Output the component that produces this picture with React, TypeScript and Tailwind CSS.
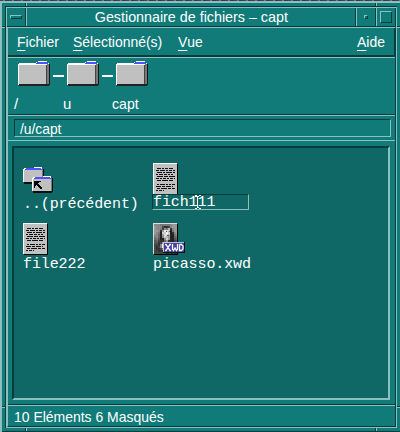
import React from "react";

const sans = "font-['Liberation_Sans',Arial,sans-serif] text-[15px] leading-[18px] text-white whitespace-pre";
const mono = "font-['Liberation_Mono','Courier_New',monospace] text-[15px] leading-[16px] tracking-[-0.1px] text-white whitespace-pre";

function Folder() {
  return (
    <svg width="33" height="26" viewBox="0 0 33 26" shapeRendering="crispEdges" className="block">
      <path d="M1 2H18V1H20V0H29V2H31V23H29V24H0V3H1Z" fill="#fff" />
      <path d="M29 3H31V23H29Z" fill="#777" />
      <path d="M31 3H32V24H31Z" fill="#181818" />
      <path d="M19 1H29V2H30V3H18V2H19Z" fill="#5252fa" />
      <path d="M1 4H29V23H1Z" fill="#c0c0c0" />
      <path d="M28 4H29V23H28Z" fill="#444" />
      <path d="M1 23H31V25H1Z" fill="#222" />
    </svg>
  );
}

function ParentFolder() {
  const small = (x: number, y: number) => (
    <g transform={`translate(${x} ${y})`}>
      <path d="M2 2H21V16H20V17H1V3H2Z" fill="#081010" />
      <path d="M1 1H11V0H19V2H20V14H19V15H0V2H1Z" fill="#fff" />
      <path d="M3 1H18V2H20V3H2V2H3Z" fill="#5252fa" />
      <path d="M1 3H19V15H1Z" fill="#c0c0c0" />
      <path d="M19 3H20V15H19Z" fill="#777" />
    </g>
  );
  return (
    <svg width="32" height="27" viewBox="0 0 32 27" shapeRendering="crispEdges" className="block">
      {small(0, 0)}
      {small(9, 9)}
      <path d="M11 14H18V15H16V16H15V17H16V18H17V19H18V20H19V22H17V21H16V20H15V19H14V18H13V19H12V21H11Z" fill="#000" />
    </svg>
  );
}

// Dash and gap lengths of each line of the miniature page.
const textLines = ["4 1 2 1 3 1", "3 1 5 1 2 1", "5 1 2 1 6 1", "2 1 4 1 3 1", "6 1 4 1", "3 1 2 1", "4 1 6 1", "0 30", "2 1 5 1 2 1", "5 1 3 1", "3 1 6 1", "2 1 3 1"];

function Doc() {
  return (
    <svg width="25" height="32" viewBox="0 0 25 32" shapeRendering="crispEdges" className="block">
      <path d="M1 1H25V32H1Z" fill="#000" />
      <path d="M0 0H24V31H0Z" fill="#fff" />
      <path d="M1 1H24V31H1Z" fill="#c0c0c0" />
      {textLines.map((line, i) => (
        <line key={i} x1={i % 2 ? 3 : 4} x2={i === 11 ? 11 : i % 3 ? 22 : 20} y1={5.5 + i * 2} y2={5.5 + i * 2}
          stroke="#111" strokeWidth="1" strokeDasharray={line} />
      ))}
    </svg>
  );
}

// Grey levels of the portrait thumbnail, two pixels per cell.
const portrait = [
  "888777778999",
  "988843348999",
  "9887487b3899",
  "99839edc2799",
  "9872ccec2389",
  "88629ddb2278",
  "78628cb92267",
  "675228c92256",
  "564336932245",
  "55349cb93344",
  "4438eedb8334",
  "4348eeec9333",
  "43347aa74333",
  "443333333333",
  "444444333333",
];

function Picture() {
  return (
    <svg width="33" height="32" viewBox="0 0 33 32" shapeRendering="crispEdges" className="block">
      <path d="M1 1H25V32H1Z" fill="#000" />
      <path d="M0 0H24V1H1V31H0Z" fill="#ddd" />
      {portrait.flatMap((row, y) =>
        row.split("").map((c, x) => (
          <rect key={`${x}-${y}`} x={1 + x * 2} y={1 + y * 2} width={x === 11 ? 1 : 2} height="2" fill={`#${c}${c}${c}`} />
        )),
      )}
      <path d="M13 8H14V9H13ZM16 8H17V9H16ZM14 12H16V13H14Z" fill="#555" />
      <path d="M10 19H32V30H10Z" fill="#101018" />
      <path d="M10 19H31V29H10Z" fill="#c0c0d8" />
      <path d="M11 20H31V29H11Z" fill="#4040a0" />
      <g stroke="#fff" strokeWidth="1.3" fill="none" shapeRendering="auto">
        <path d="M12 21.5H13L17 27.5H18M18 21.5H17L13 27.5H12" />
        <path d="M19.5 21V26L20.5 27.5L22 25L23.5 27.5L24.5 26V21" />
        <path d="M26.5 21.5H28.5L30 23V26L28.5 27.5H26.5V21.5" />
      </g>
    </svg>
  );
}

function MenuItem({ label }: { label: string }) {
  return (
    <div className={`${sans} w-max origin-left scale-x-[.93]`}>
      <span className="inline-block h-[18px] border-b border-white">{label[0]}</span>
      {label.slice(1)}
    </div>
  );
}

function Ticks({ className }: { className: string }) {
  return (
    <div className={`flex ${className}`}>
      <i className="ml-[23px] w-px bg-[#083c3c]" />
      <i className="w-px bg-[#8bc0be]" />
      <i className="ml-[348px] w-px bg-[#083c3c]" />
      <i className="w-px bg-[#8bc0be]" />
    </div>
  );
}

function SideTick({ className }: { className: string }) {
  return <i className={`absolute h-0.5 w-[3px] border-t border-b border-t-[#083c3c] border-b-[#8bc0be] ${className}`} />;
}

export default function App() {
  return (
    <div className="relative flex h-[432px] w-[400px] flex-col overflow-hidden bg-[#117b79]">
      <div className="h-px shrink-0 bg-[repeating-linear-gradient(90deg,#484058_0px,#484058_3px,#77708a_3px,#77708a_5px,#38384c_5px,#38384c_9px)]" />
      <div className="h-0.5 shrink-0 bg-[#8bc0be]" />
      <div className="flex grow flex-col border-l-2 border-[#8bc0be]">
        <Ticks className="h-[3px]" />
        <div className="ml-[3px] flex h-[422px] w-[392px] flex-col border-t border-l border-[#083c3c]">
          <div className="flex h-[421px] flex-col border-t border-l border-r border-b border-[#8bc0be]">
            <header className="flex h-[19px] border-b border-[#083c3c]">
              <div className="flex w-[19px] items-center justify-center border-r border-[#083c3c]">
                <i className="h-1 w-3 border border-[#8bc0be] border-r-[#083c3c] border-b-[#083c3c]" />
              </div>
              <div className="flex w-[330px] justify-center border-r border-l border-r-[#083c3c] border-l-[#8bc0be]">
                <h1 className={`${sans} scale-x-[.953]`}>Gestionnaire de fichiers – capt</h1>
              </div>
              <div className="flex w-5 items-center justify-center border-r border-l border-r-[#083c3c] border-l-[#8bc0be]">
                <i className="size-1 border border-[#8bc0be] border-r-[#083c3c] border-b-[#083c3c]" />
              </div>
              <div className="flex w-5 items-center justify-center border-r border-l border-r-[#083c3c] border-l-[#8bc0be]">
                <i className="size-3 border border-[#8bc0be] border-r-[#083c3c] border-b-[#083c3c]" />
              </div>
            </header>
            <div className="flex grow flex-col border-t border-l border-r border-b border-t-[#8bc0be] border-l-[#8bc0be] border-r-[#083c3c] border-b-[#083c3c]">
              <nav className="flex h-[29px] items-start border-r border-b-2 border-[#083c3c] pt-[5px] pr-[7px] pl-[9px]">
                <div className="w-14"><MenuItem label="Fichier" /></div>
                <div className="w-[105px]"><MenuItem label="Sélectionné(s)" /></div>
                <div className="grow"><MenuItem label="Vue" /></div>
                <MenuItem label="Aide" />
              </nav>
              <section className="h-[58px] border-t border-b border-t-[#8bc0be] border-b-[#083c3c] pt-[3px]">
                <div className="flex items-center pl-[10px]">
                  <Folder />
                  <i className="mt-1 ml-0.5 h-0.5 w-[11px] bg-white" />
                  <div className="ml-[3px]"><Folder /></div>
                  <i className="mt-1 ml-0.5 h-0.5 w-[11px] bg-white" />
                  <div className="ml-[3px]"><Folder /></div>
                </div>
                <div className={`${sans} mt-2 flex pl-1.5`}>
                  <span className="w-[49px]">/</span>
                  <span className="w-[49px]">u</span>
                  <span className="origin-left scale-x-[.94]">capt</span>
                </div>
              </section>
              <section className="h-[25px] border-t border-[#8bc0be] pt-[3px] pr-1 pl-1.5">
                <div className="h-[18px] border-t border-l border-r border-b border-t-[#083c3c] border-l-[#083c3c] border-r-[#8bc0be] border-b-[#8bc0be] pl-[5px]">
                  <div className={`${sans} origin-left scale-x-[.92]`}>/u/capt</div>
                </div>
              </section>
              <div className="h-[265px] border-t border-b border-t-[#8bc0be] border-b-[#083c3c] pt-[5px] pr-[5px] pl-1">
                <main className="grid h-[254px] grid-cols-[130px_1fr] grid-rows-[60px_60px] border-2 border-t-[#083c3c] border-l-[#083c3c] border-r-[#8bc0be] border-b-[#8bc0be] bg-[#0f6866] pt-[15px] pl-[9px]">
                  <div className="pt-1">
                    <ParentFolder />
                    <div className={`${mono} mt-[3px]`}>..(précédent)</div>
                  </div>
                  <div>
                    <Doc />
                    <div className="relative -mt-px -ml-px h-4 w-[97px] border border-t-[#083c3c] border-l-[#083c3c] border-r-[#8bc0be] border-b-[#8bc0be]">
                      <div className={mono}>fich111</div>
                      <svg width="6" height="14" viewBox="0 0 6 14" shapeRendering="crispEdges" className="absolute top-0 left-[42px]">
                        <path d="M0 0H2V1H4V0H6V1H4V2H3V12H4V13H6V14H4V13H2V14H0V13H2V2H0Z" fill="#fff" />
                      </svg>
                    </div>
                  </div>
                  <div><Doc /><div className={`${mono} mt-0.5`}>file222</div></div>
                  <div><Picture /><div className={`${mono} mt-0.5`}>picasso.xwd</div></div>
                </main>
              </div>
              <footer className={`${sans} flex grow items-center border-t border-[#8bc0be] pt-0.5 pl-1.5`}>
                <span className="origin-left scale-x-[.93]">10 Eléments 6 Masqués</span>
              </footer>
            </div>
          </div>
        </div>
        <Ticks className="h-[3px]" />
        <div className="h-px bg-[#083c3c]" />
      </div>
      <SideTick className="left-0.5 top-[26px]" />
      <SideTick className="right-0 top-[26px]" />
      <SideTick className="left-0.5 top-[406px]" />
      <SideTick className="right-0 top-[406px]" />
    </div>
  );
}
